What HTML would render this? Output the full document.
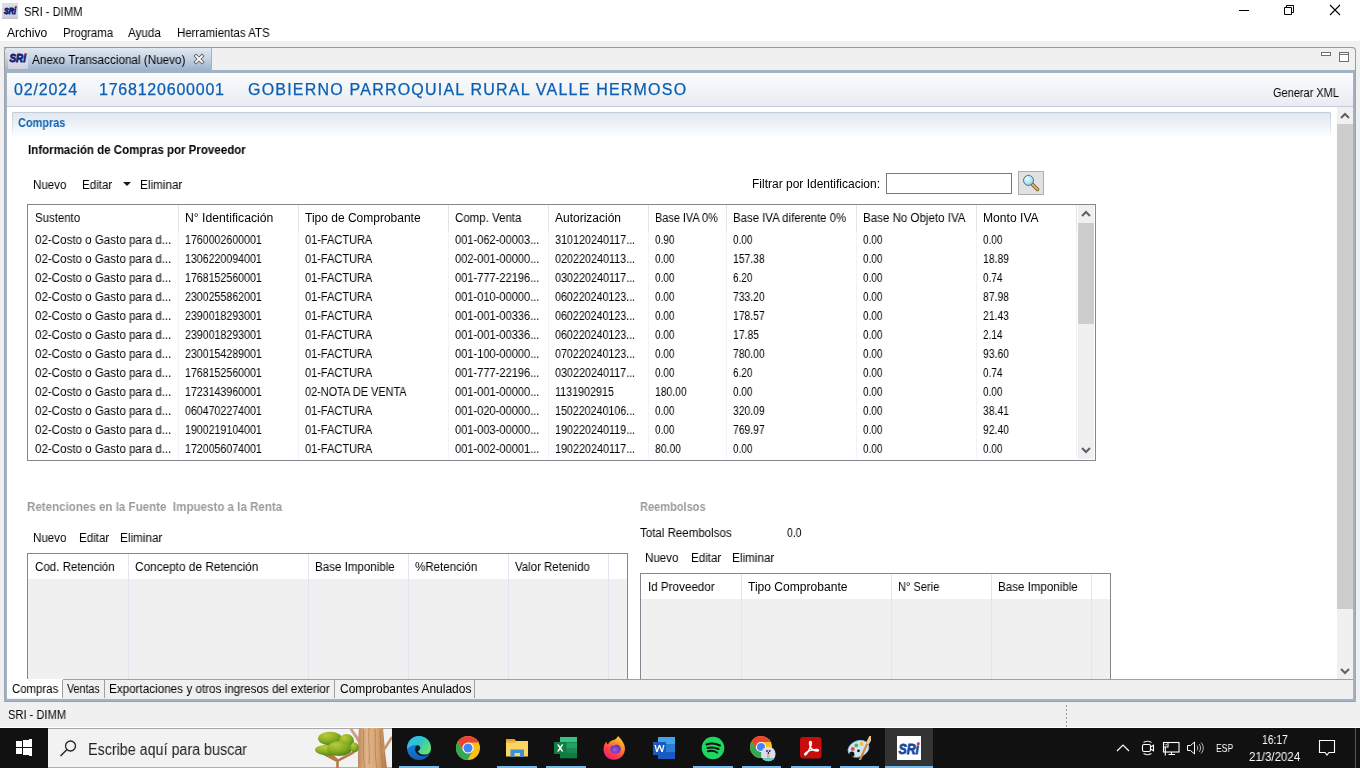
<!DOCTYPE html>
<html><head><meta charset="utf-8"><title>SRI - DIMM</title>
<style>
html,body{margin:0;padding:0}
body{width:1360px;height:768px;overflow:hidden;position:relative;background:#f0f0f0;font-family:"Liberation Sans",sans-serif;}
body>div,body>svg,body>span{position:absolute}
.t{position:absolute;white-space:pre;will-change:transform;font-family:"Liberation Sans",sans-serif}
</style></head><body>
<div style="left:0px;top:0px;width:1360px;height:41px;background:#fff"></div>
<svg style="left:2px;top:3px" width="16" height="16"><defs><linearGradient id="sg1" x1="0" y1="0" x2="0" y2="1"><stop offset="0" stop-color="#dcdce8"/><stop offset="0.7" stop-color="#d6d6e6"/><stop offset="1" stop-color="#c4c4d0"/></linearGradient></defs>
<rect width="16" height="16" fill="url(#sg1)"/>
<text x="2" y="10.6" font-family="Liberation Sans" font-weight="bold" font-style="italic" font-size="9.6" textLength="12" lengthAdjust="spacingAndGlyphs" fill="#0d1a6e" stroke="#0d1a6e" stroke-width="0.8">SRi</text>
<circle cx="14" cy="3.6" r="0.9" fill="#d04040"/></svg>
<span class="t" style="left:24px;top:6px;font-size:12px;line-height:12px;color:#000;transform:scaleX(0.9317);transform-origin:0 0;">SRI - DIMM</span>
<div style="left:1239px;top:10px;width:10px;height:1px;background:#000"></div>
<svg style="left:1283px;top:4px" width="12" height="12"><path d="M1.5 3.5h7v7h-7z M3.5 3.5v-2h7v7h-2" fill="none" stroke="#000" stroke-width="1"/></svg>
<svg style="left:1329px;top:4px" width="12" height="12"><path d="M1 1L11 11M11 1L1 11" stroke="#000" stroke-width="1.1"/></svg>
<span class="t" style="left:7px;top:27px;font-size:12px;line-height:12px;color:#000;transform:scaleX(1.0050);transform-origin:0 0;">Archivo</span>
<span class="t" style="left:63px;top:27px;font-size:12px;line-height:12px;color:#000;transform:scaleX(0.9509);transform-origin:0 0;">Programa</span>
<span class="t" style="left:128px;top:27px;font-size:12px;line-height:12px;color:#000;transform:scaleX(0.9706);transform-origin:0 0;">Ayuda</span>
<span class="t" style="left:177px;top:27px;font-size:12px;line-height:12px;color:#000;transform:scaleX(0.9526);transform-origin:0 0;">Herramientas ATS</span>
<div style="left:4px;top:47px;width:1352px;height:25px;background:#f0f0f0;border-top:1px solid #9a9a9a;border-right:1px solid #9a9a9a;border-top-right-radius:4px;box-sizing:border-box"></div>
<div style="left:4px;top:47px;width:208px;height:24px;background:linear-gradient(#e2e9f2,#c6d4e4 45%,#98afcb);border-top:1px solid #979797;border-left:1px solid #979797;border-right:1px solid #a6b0bc;border-top-left-radius:3px;box-sizing:border-box"></div>
<svg style="left:8px;top:50px" width="20" height="19"><defs><linearGradient id="sg2" x1="0" y1="0" x2="0" y2="1"><stop offset="0" stop-color="#dfe0ec"/><stop offset="0.75" stop-color="#d8d8e6"/><stop offset="1" stop-color="#cfd0dc"/></linearGradient></defs>
<rect width="20" height="19" fill="url(#sg2)"/>
<text x="1.5" y="12.2" font-family="Liberation Sans" font-weight="bold" font-style="italic" font-size="11.8" textLength="16.5" lengthAdjust="spacingAndGlyphs" fill="#13207a" stroke="#13207a" stroke-width="0.8">SRi</text>
<circle cx="17.6" cy="4.4" r="1.1" fill="#d03030"/></svg>
<span class="t" style="left:32px;top:54px;font-size:12px;line-height:12px;color:#000;transform:scaleX(0.9745);transform-origin:0 0;">Anexo Transaccional (Nuevo)</span>
<svg style="left:193px;top:53px" width="12" height="12"><path d="M3 3L9 9M9 3L3 9" stroke="#5f5f5f" stroke-width="3.6" stroke-linecap="square"/><path d="M3 3L9 9M9 3L3 9" stroke="#fff" stroke-width="1.8" stroke-linecap="square"/></svg>
<div style="left:1321px;top:52px;width:10px;height:4px;border:1px solid #6e6e6e;box-sizing:border-box;background:#fff"></div>
<div style="left:1339px;top:52px;width:10px;height:10px;border:1px solid #6e6e6e;box-sizing:border-box;background:#fff"></div>
<div style="left:1340px;top:54px;width:8px;height:1px;background:#6e6e6e"></div>
<div style="left:4px;top:70px;width:1352px;height:3px;background:#a3b3c6"></div>
<div style="left:4px;top:70px;width:3px;height:632px;background:linear-gradient(90deg,#97a1ad,#a2afbe 45%,#a5b2c2)"></div>
<div style="left:1353px;top:70px;width:3px;height:632px;background:linear-gradient(90deg,#a5b2c2,#a2afbe 55%,#97a1ad)"></div>
<div style="left:4px;top:699px;width:1352px;height:3px;background:linear-gradient(#a5b3c5,#a3b1c3 50%,#8f9cad)"></div>
<div style="left:7px;top:698px;width:1346px;height:1px;background:#e8eff8"></div>
<div style="left:7px;top:73px;width:1346px;height:33px;background:linear-gradient(#fbfcfe,#e8ecf2)"></div>
<div style="left:7px;top:106px;width:1346px;height:1px;background:#c3ccd7"></div>
<div style="left:7px;top:107px;width:1330px;height:572px;background:#fff"></div>
<span class="t" style="left:14px;top:82px;font-size:16px;line-height:16px;color:#0a5fb2;letter-spacing:0.867px;-webkit-text-stroke:0.25px #0a5fb2;">02/2024</span>
<span class="t" style="left:99px;top:82px;font-size:16px;line-height:16px;color:#0a5fb2;letter-spacing:0.775px;-webkit-text-stroke:0.25px #0a5fb2;">1768120600001</span>
<span class="t" style="left:248px;top:82px;font-size:16px;line-height:16px;color:#0a5fb2;letter-spacing:1.211px;-webkit-text-stroke:0.25px #0a5fb2;">GOBIERNO PARROQUIAL RURAL VALLE HERMOSO</span>
<span class="t" style="left:1273px;top:87px;font-size:12px;line-height:12px;color:#000;transform:scaleX(0.9167);transform-origin:0 0;">Generar XML</span>
<div style="left:12px;top:112px;width:1319px;height:26px;background:linear-gradient(#dfe7f1,#fff)"></div>
<div style="left:13px;top:112px;width:1317px;height:1px;background:#c4ccd6"></div>
<div style="left:12px;top:113px;width:1px;height:25px;background:linear-gradient(#c4ccd6,rgba(255,255,255,0))"></div>
<div style="left:1330px;top:113px;width:1px;height:25px;background:linear-gradient(#c4ccd6,rgba(255,255,255,0))"></div>
<span class="t" style="left:18px;top:117px;font-size:12px;line-height:12px;color:#0f62b0;transform:scaleX(0.9096);transform-origin:0 0;font-weight:bold;">Compras</span>
<span class="t" style="left:28px;top:144px;font-size:12px;line-height:12px;color:#000;transform:scaleX(0.9604);transform-origin:0 0;font-weight:bold;">Información de Compras por Proveedor</span>
<span class="t" style="left:33px;top:179px;font-size:12px;line-height:12px;color:#000;transform:scaleX(0.9629);transform-origin:0 0;">Nuevo</span>
<span class="t" style="left:82px;top:179px;font-size:12px;line-height:12px;color:#000;transform:scaleX(0.9677);transform-origin:0 0;">Editar</span>
<svg style="left:123px;top:182px" width="9" height="5"><path d="M0 0h8L4 4z" fill="#1a1a1a"/></svg>
<span class="t" style="left:140px;top:179px;font-size:12px;line-height:12px;color:#000;transform:scaleX(0.9791);transform-origin:0 0;">Eliminar</span>
<span class="t" style="left:752px;top:178px;font-size:12px;line-height:12px;color:#000;transform:scaleX(0.9969);transform-origin:0 0;">Filtrar por Identificacion:</span>
<div style="left:886px;top:173px;width:126px;height:21px;border:1px solid #7a7a7a;background:#fff;box-sizing:border-box"></div>
<div style="left:1018px;top:171px;width:26px;height:24px;border:1px solid #adadad;background:#e1e1e1;box-sizing:border-box"></div>
<svg style="left:1018px;top:171px" width="26" height="24">
<defs><radialGradient id="mg" cx="0.4" cy="0.35" r="0.7"><stop offset="0" stop-color="#e8fcff"/><stop offset="0.6" stop-color="#b0e8fa"/><stop offset="1" stop-color="#78c8ec"/></radialGradient></defs>
<line x1="14.5" y1="13.5" x2="19.5" y2="18.5" stroke="#6a4a20" stroke-width="3.4" stroke-linecap="round"/>
<line x1="14.5" y1="13.5" x2="19.5" y2="18.5" stroke="#eab85a" stroke-width="1.8" stroke-linecap="round"/>
<circle cx="10.5" cy="9.4" r="5" fill="url(#mg)" stroke="#56707e" stroke-width="1"/>
</svg>
<div style="left:27px;top:204px;width:1069px;height:257px;border:1px solid #828790;background:#fff;box-sizing:border-box"></div>
<div style="left:178px;top:205px;width:1px;height:254px;background:#f1f3f6"></div>
<div style="left:178px;top:205px;width:1px;height:26px;background:#e5e5e5"></div>
<div style="left:298px;top:205px;width:1px;height:254px;background:#f1f3f6"></div>
<div style="left:298px;top:205px;width:1px;height:26px;background:#e5e5e5"></div>
<div style="left:448px;top:205px;width:1px;height:254px;background:#f1f3f6"></div>
<div style="left:448px;top:205px;width:1px;height:26px;background:#e5e5e5"></div>
<div style="left:548px;top:205px;width:1px;height:254px;background:#f1f3f6"></div>
<div style="left:548px;top:205px;width:1px;height:26px;background:#e5e5e5"></div>
<div style="left:648px;top:205px;width:1px;height:254px;background:#f1f3f6"></div>
<div style="left:648px;top:205px;width:1px;height:26px;background:#e5e5e5"></div>
<div style="left:726px;top:205px;width:1px;height:254px;background:#f1f3f6"></div>
<div style="left:726px;top:205px;width:1px;height:26px;background:#e5e5e5"></div>
<div style="left:856px;top:205px;width:1px;height:254px;background:#f1f3f6"></div>
<div style="left:856px;top:205px;width:1px;height:26px;background:#e5e5e5"></div>
<div style="left:976px;top:205px;width:1px;height:254px;background:#f1f3f6"></div>
<div style="left:976px;top:205px;width:1px;height:26px;background:#e5e5e5"></div>
<div style="left:1076px;top:205px;width:1px;height:254px;background:#f1f3f6"></div>
<div style="left:1076px;top:205px;width:1px;height:26px;background:#e5e5e5"></div>
<span class="t" style="left:35px;top:212px;font-size:12px;line-height:12px;color:#000;transform:scaleX(0.9521);transform-origin:0 0;">Sustento</span>
<span class="t" style="left:185px;top:212px;font-size:12px;line-height:12px;color:#000;transform:scaleX(1.0172);transform-origin:0 0;">N° Identificación</span>
<span class="t" style="left:305px;top:212px;font-size:12px;line-height:12px;color:#000;transform:scaleX(1.0000);transform-origin:0 0;">Tipo de Comprobante</span>
<span class="t" style="left:455px;top:212px;font-size:12px;line-height:12px;color:#000;transform:scaleX(0.9571);transform-origin:0 0;">Comp. Venta</span>
<span class="t" style="left:555px;top:212px;font-size:12px;line-height:12px;color:#000;transform:scaleX(1.0000);transform-origin:0 0;">Autorización</span>
<span class="t" style="left:655px;top:212px;font-size:12px;line-height:12px;color:#000;transform:scaleX(0.9072);transform-origin:0 0;">Base IVA 0%</span>
<span class="t" style="left:733px;top:212px;font-size:12px;line-height:12px;color:#000;transform:scaleX(0.9496);transform-origin:0 0;">Base IVA diferente 0%</span>
<span class="t" style="left:863px;top:212px;font-size:12px;line-height:12px;color:#000;transform:scaleX(0.9623);transform-origin:0 0;">Base No Objeto IVA</span>
<span class="t" style="left:983px;top:212px;font-size:12px;line-height:12px;color:#000;transform:scaleX(1.0091);transform-origin:0 0;">Monto IVA</span>
<span class="t" style="left:35px;top:234px;font-size:12px;line-height:12px;color:#000;transform:scaleX(0.9645);transform-origin:0 0;">02-Costo o Gasto para d...</span>
<span class="t" style="left:185px;top:234px;font-size:12px;line-height:12px;color:#000;transform:scaleX(0.8851);transform-origin:0 0;">1760002600001</span>
<span class="t" style="left:305px;top:234px;font-size:12px;line-height:12px;color:#000;transform:scaleX(0.9178);transform-origin:0 0;">01-FACTURA</span>
<span class="t" style="left:455px;top:234px;font-size:12px;line-height:12px;color:#000;transform:scaleX(0.9231);transform-origin:0 0;">001-062-00003...</span>
<span class="t" style="left:555px;top:234px;font-size:12px;line-height:12px;color:#000;transform:scaleX(0.8989);transform-origin:0 0;">310120240117...</span>
<span class="t" style="left:655px;top:234px;font-size:12px;line-height:12px;color:#000;transform:scaleX(0.8333);transform-origin:0 0;">0.90</span>
<span class="t" style="left:733px;top:234px;font-size:12px;line-height:12px;color:#000;transform:scaleX(0.8333);transform-origin:0 0;">0.00</span>
<span class="t" style="left:863px;top:234px;font-size:12px;line-height:12px;color:#000;transform:scaleX(0.8333);transform-origin:0 0;">0.00</span>
<span class="t" style="left:983px;top:234px;font-size:12px;line-height:12px;color:#000;transform:scaleX(0.8333);transform-origin:0 0;">0.00</span>
<span class="t" style="left:35px;top:253px;font-size:12px;line-height:12px;color:#000;transform:scaleX(0.9645);transform-origin:0 0;">02-Costo o Gasto para d...</span>
<span class="t" style="left:185px;top:253px;font-size:12px;line-height:12px;color:#000;transform:scaleX(0.8851);transform-origin:0 0;">1306220094001</span>
<span class="t" style="left:305px;top:253px;font-size:12px;line-height:12px;color:#000;transform:scaleX(0.9178);transform-origin:0 0;">01-FACTURA</span>
<span class="t" style="left:455px;top:253px;font-size:12px;line-height:12px;color:#000;transform:scaleX(0.9231);transform-origin:0 0;">002-001-00000...</span>
<span class="t" style="left:555px;top:253px;font-size:12px;line-height:12px;color:#000;transform:scaleX(0.8989);transform-origin:0 0;">020220240113...</span>
<span class="t" style="left:655px;top:253px;font-size:12px;line-height:12px;color:#000;transform:scaleX(0.8333);transform-origin:0 0;">0.00</span>
<span class="t" style="left:733px;top:253px;font-size:12px;line-height:12px;color:#000;transform:scaleX(0.8649);transform-origin:0 0;">157.38</span>
<span class="t" style="left:863px;top:253px;font-size:12px;line-height:12px;color:#000;transform:scaleX(0.8333);transform-origin:0 0;">0.00</span>
<span class="t" style="left:983px;top:253px;font-size:12px;line-height:12px;color:#000;transform:scaleX(0.8667);transform-origin:0 0;">18.89</span>
<span class="t" style="left:35px;top:272px;font-size:12px;line-height:12px;color:#000;transform:scaleX(0.9645);transform-origin:0 0;">02-Costo o Gasto para d...</span>
<span class="t" style="left:185px;top:272px;font-size:12px;line-height:12px;color:#000;transform:scaleX(0.8851);transform-origin:0 0;">1768152560001</span>
<span class="t" style="left:305px;top:272px;font-size:12px;line-height:12px;color:#000;transform:scaleX(0.9178);transform-origin:0 0;">01-FACTURA</span>
<span class="t" style="left:455px;top:272px;font-size:12px;line-height:12px;color:#000;transform:scaleX(0.9231);transform-origin:0 0;">001-777-22196...</span>
<span class="t" style="left:555px;top:272px;font-size:12px;line-height:12px;color:#000;transform:scaleX(0.8989);transform-origin:0 0;">030220240117...</span>
<span class="t" style="left:655px;top:272px;font-size:12px;line-height:12px;color:#000;transform:scaleX(0.8333);transform-origin:0 0;">0.00</span>
<span class="t" style="left:733px;top:272px;font-size:12px;line-height:12px;color:#000;transform:scaleX(0.8333);transform-origin:0 0;">6.20</span>
<span class="t" style="left:863px;top:272px;font-size:12px;line-height:12px;color:#000;transform:scaleX(0.8333);transform-origin:0 0;">0.00</span>
<span class="t" style="left:983px;top:272px;font-size:12px;line-height:12px;color:#000;transform:scaleX(0.8333);transform-origin:0 0;">0.74</span>
<span class="t" style="left:35px;top:291px;font-size:12px;line-height:12px;color:#000;transform:scaleX(0.9645);transform-origin:0 0;">02-Costo o Gasto para d...</span>
<span class="t" style="left:185px;top:291px;font-size:12px;line-height:12px;color:#000;transform:scaleX(0.8851);transform-origin:0 0;">2300255862001</span>
<span class="t" style="left:305px;top:291px;font-size:12px;line-height:12px;color:#000;transform:scaleX(0.9178);transform-origin:0 0;">01-FACTURA</span>
<span class="t" style="left:455px;top:291px;font-size:12px;line-height:12px;color:#000;transform:scaleX(0.9231);transform-origin:0 0;">001-010-00000...</span>
<span class="t" style="left:555px;top:291px;font-size:12px;line-height:12px;color:#000;transform:scaleX(0.8889);transform-origin:0 0;">060220240123...</span>
<span class="t" style="left:655px;top:291px;font-size:12px;line-height:12px;color:#000;transform:scaleX(0.8333);transform-origin:0 0;">0.00</span>
<span class="t" style="left:733px;top:291px;font-size:12px;line-height:12px;color:#000;transform:scaleX(0.8649);transform-origin:0 0;">733.20</span>
<span class="t" style="left:863px;top:291px;font-size:12px;line-height:12px;color:#000;transform:scaleX(0.8333);transform-origin:0 0;">0.00</span>
<span class="t" style="left:983px;top:291px;font-size:12px;line-height:12px;color:#000;transform:scaleX(0.8667);transform-origin:0 0;">87.98</span>
<span class="t" style="left:35px;top:310px;font-size:12px;line-height:12px;color:#000;transform:scaleX(0.9645);transform-origin:0 0;">02-Costo o Gasto para d...</span>
<span class="t" style="left:185px;top:310px;font-size:12px;line-height:12px;color:#000;transform:scaleX(0.8851);transform-origin:0 0;">2390018293001</span>
<span class="t" style="left:305px;top:310px;font-size:12px;line-height:12px;color:#000;transform:scaleX(0.9178);transform-origin:0 0;">01-FACTURA</span>
<span class="t" style="left:455px;top:310px;font-size:12px;line-height:12px;color:#000;transform:scaleX(0.9231);transform-origin:0 0;">001-001-00336...</span>
<span class="t" style="left:555px;top:310px;font-size:12px;line-height:12px;color:#000;transform:scaleX(0.8889);transform-origin:0 0;">060220240123...</span>
<span class="t" style="left:655px;top:310px;font-size:12px;line-height:12px;color:#000;transform:scaleX(0.8333);transform-origin:0 0;">0.00</span>
<span class="t" style="left:733px;top:310px;font-size:12px;line-height:12px;color:#000;transform:scaleX(0.8649);transform-origin:0 0;">178.57</span>
<span class="t" style="left:863px;top:310px;font-size:12px;line-height:12px;color:#000;transform:scaleX(0.8333);transform-origin:0 0;">0.00</span>
<span class="t" style="left:983px;top:310px;font-size:12px;line-height:12px;color:#000;transform:scaleX(0.8667);transform-origin:0 0;">21.43</span>
<span class="t" style="left:35px;top:329px;font-size:12px;line-height:12px;color:#000;transform:scaleX(0.9645);transform-origin:0 0;">02-Costo o Gasto para d...</span>
<span class="t" style="left:185px;top:329px;font-size:12px;line-height:12px;color:#000;transform:scaleX(0.8851);transform-origin:0 0;">2390018293001</span>
<span class="t" style="left:305px;top:329px;font-size:12px;line-height:12px;color:#000;transform:scaleX(0.9178);transform-origin:0 0;">01-FACTURA</span>
<span class="t" style="left:455px;top:329px;font-size:12px;line-height:12px;color:#000;transform:scaleX(0.9231);transform-origin:0 0;">001-001-00336...</span>
<span class="t" style="left:555px;top:329px;font-size:12px;line-height:12px;color:#000;transform:scaleX(0.8889);transform-origin:0 0;">060220240123...</span>
<span class="t" style="left:655px;top:329px;font-size:12px;line-height:12px;color:#000;transform:scaleX(0.8333);transform-origin:0 0;">0.00</span>
<span class="t" style="left:733px;top:329px;font-size:12px;line-height:12px;color:#000;transform:scaleX(0.8667);transform-origin:0 0;">17.85</span>
<span class="t" style="left:863px;top:329px;font-size:12px;line-height:12px;color:#000;transform:scaleX(0.8333);transform-origin:0 0;">0.00</span>
<span class="t" style="left:983px;top:329px;font-size:12px;line-height:12px;color:#000;transform:scaleX(0.8333);transform-origin:0 0;">2.14</span>
<span class="t" style="left:35px;top:348px;font-size:12px;line-height:12px;color:#000;transform:scaleX(0.9645);transform-origin:0 0;">02-Costo o Gasto para d...</span>
<span class="t" style="left:185px;top:348px;font-size:12px;line-height:12px;color:#000;transform:scaleX(0.8851);transform-origin:0 0;">2300154289001</span>
<span class="t" style="left:305px;top:348px;font-size:12px;line-height:12px;color:#000;transform:scaleX(0.9178);transform-origin:0 0;">01-FACTURA</span>
<span class="t" style="left:455px;top:348px;font-size:12px;line-height:12px;color:#000;transform:scaleX(0.9231);transform-origin:0 0;">001-100-00000...</span>
<span class="t" style="left:555px;top:348px;font-size:12px;line-height:12px;color:#000;transform:scaleX(0.8889);transform-origin:0 0;">070220240123...</span>
<span class="t" style="left:655px;top:348px;font-size:12px;line-height:12px;color:#000;transform:scaleX(0.8333);transform-origin:0 0;">0.00</span>
<span class="t" style="left:733px;top:348px;font-size:12px;line-height:12px;color:#000;transform:scaleX(0.8649);transform-origin:0 0;">780.00</span>
<span class="t" style="left:863px;top:348px;font-size:12px;line-height:12px;color:#000;transform:scaleX(0.8333);transform-origin:0 0;">0.00</span>
<span class="t" style="left:983px;top:348px;font-size:12px;line-height:12px;color:#000;transform:scaleX(0.8667);transform-origin:0 0;">93.60</span>
<span class="t" style="left:35px;top:367px;font-size:12px;line-height:12px;color:#000;transform:scaleX(0.9645);transform-origin:0 0;">02-Costo o Gasto para d...</span>
<span class="t" style="left:185px;top:367px;font-size:12px;line-height:12px;color:#000;transform:scaleX(0.8851);transform-origin:0 0;">1768152560001</span>
<span class="t" style="left:305px;top:367px;font-size:12px;line-height:12px;color:#000;transform:scaleX(0.9178);transform-origin:0 0;">01-FACTURA</span>
<span class="t" style="left:455px;top:367px;font-size:12px;line-height:12px;color:#000;transform:scaleX(0.9231);transform-origin:0 0;">001-777-22196...</span>
<span class="t" style="left:555px;top:367px;font-size:12px;line-height:12px;color:#000;transform:scaleX(0.8989);transform-origin:0 0;">030220240117...</span>
<span class="t" style="left:655px;top:367px;font-size:12px;line-height:12px;color:#000;transform:scaleX(0.8333);transform-origin:0 0;">0.00</span>
<span class="t" style="left:733px;top:367px;font-size:12px;line-height:12px;color:#000;transform:scaleX(0.8333);transform-origin:0 0;">6.20</span>
<span class="t" style="left:863px;top:367px;font-size:12px;line-height:12px;color:#000;transform:scaleX(0.8333);transform-origin:0 0;">0.00</span>
<span class="t" style="left:983px;top:367px;font-size:12px;line-height:12px;color:#000;transform:scaleX(0.8333);transform-origin:0 0;">0.74</span>
<span class="t" style="left:35px;top:386px;font-size:12px;line-height:12px;color:#000;transform:scaleX(0.9645);transform-origin:0 0;">02-Costo o Gasto para d...</span>
<span class="t" style="left:185px;top:386px;font-size:12px;line-height:12px;color:#000;transform:scaleX(0.8851);transform-origin:0 0;">1723143960001</span>
<span class="t" style="left:305px;top:386px;font-size:12px;line-height:12px;color:#000;transform:scaleX(0.9107);transform-origin:0 0;">02-NOTA DE VENTA</span>
<span class="t" style="left:455px;top:386px;font-size:12px;line-height:12px;color:#000;transform:scaleX(0.9231);transform-origin:0 0;">001-001-00000...</span>
<span class="t" style="left:555px;top:386px;font-size:12px;line-height:12px;color:#000;transform:scaleX(0.8939);transform-origin:0 0;">1131902915</span>
<span class="t" style="left:655px;top:386px;font-size:12px;line-height:12px;color:#000;transform:scaleX(0.8649);transform-origin:0 0;">180.00</span>
<span class="t" style="left:733px;top:386px;font-size:12px;line-height:12px;color:#000;transform:scaleX(0.8333);transform-origin:0 0;">0.00</span>
<span class="t" style="left:863px;top:386px;font-size:12px;line-height:12px;color:#000;transform:scaleX(0.8333);transform-origin:0 0;">0.00</span>
<span class="t" style="left:983px;top:386px;font-size:12px;line-height:12px;color:#000;transform:scaleX(0.8333);transform-origin:0 0;">0.00</span>
<span class="t" style="left:35px;top:405px;font-size:12px;line-height:12px;color:#000;transform:scaleX(0.9645);transform-origin:0 0;">02-Costo o Gasto para d...</span>
<span class="t" style="left:185px;top:405px;font-size:12px;line-height:12px;color:#000;transform:scaleX(0.8851);transform-origin:0 0;">0604702274001</span>
<span class="t" style="left:305px;top:405px;font-size:12px;line-height:12px;color:#000;transform:scaleX(0.9178);transform-origin:0 0;">01-FACTURA</span>
<span class="t" style="left:455px;top:405px;font-size:12px;line-height:12px;color:#000;transform:scaleX(0.9231);transform-origin:0 0;">001-020-00000...</span>
<span class="t" style="left:555px;top:405px;font-size:12px;line-height:12px;color:#000;transform:scaleX(0.8889);transform-origin:0 0;">150220240106...</span>
<span class="t" style="left:655px;top:405px;font-size:12px;line-height:12px;color:#000;transform:scaleX(0.8333);transform-origin:0 0;">0.00</span>
<span class="t" style="left:733px;top:405px;font-size:12px;line-height:12px;color:#000;transform:scaleX(0.8649);transform-origin:0 0;">320.09</span>
<span class="t" style="left:863px;top:405px;font-size:12px;line-height:12px;color:#000;transform:scaleX(0.8333);transform-origin:0 0;">0.00</span>
<span class="t" style="left:983px;top:405px;font-size:12px;line-height:12px;color:#000;transform:scaleX(0.8667);transform-origin:0 0;">38.41</span>
<span class="t" style="left:35px;top:424px;font-size:12px;line-height:12px;color:#000;transform:scaleX(0.9645);transform-origin:0 0;">02-Costo o Gasto para d...</span>
<span class="t" style="left:185px;top:424px;font-size:12px;line-height:12px;color:#000;transform:scaleX(0.8851);transform-origin:0 0;">1900219104001</span>
<span class="t" style="left:305px;top:424px;font-size:12px;line-height:12px;color:#000;transform:scaleX(0.9178);transform-origin:0 0;">01-FACTURA</span>
<span class="t" style="left:455px;top:424px;font-size:12px;line-height:12px;color:#000;transform:scaleX(0.9231);transform-origin:0 0;">001-003-00000...</span>
<span class="t" style="left:555px;top:424px;font-size:12px;line-height:12px;color:#000;transform:scaleX(0.8989);transform-origin:0 0;">190220240119...</span>
<span class="t" style="left:655px;top:424px;font-size:12px;line-height:12px;color:#000;transform:scaleX(0.8333);transform-origin:0 0;">0.00</span>
<span class="t" style="left:733px;top:424px;font-size:12px;line-height:12px;color:#000;transform:scaleX(0.8649);transform-origin:0 0;">769.97</span>
<span class="t" style="left:863px;top:424px;font-size:12px;line-height:12px;color:#000;transform:scaleX(0.8333);transform-origin:0 0;">0.00</span>
<span class="t" style="left:983px;top:424px;font-size:12px;line-height:12px;color:#000;transform:scaleX(0.8667);transform-origin:0 0;">92.40</span>
<span class="t" style="left:35px;top:443px;font-size:12px;line-height:12px;color:#000;transform:scaleX(0.9645);transform-origin:0 0;">02-Costo o Gasto para d...</span>
<span class="t" style="left:185px;top:443px;font-size:12px;line-height:12px;color:#000;transform:scaleX(0.8851);transform-origin:0 0;">1720056074001</span>
<span class="t" style="left:305px;top:443px;font-size:12px;line-height:12px;color:#000;transform:scaleX(0.9178);transform-origin:0 0;">01-FACTURA</span>
<span class="t" style="left:455px;top:443px;font-size:12px;line-height:12px;color:#000;transform:scaleX(0.9231);transform-origin:0 0;">001-002-00001...</span>
<span class="t" style="left:555px;top:443px;font-size:12px;line-height:12px;color:#000;transform:scaleX(0.8989);transform-origin:0 0;">190220240117...</span>
<span class="t" style="left:655px;top:443px;font-size:12px;line-height:12px;color:#000;transform:scaleX(0.8667);transform-origin:0 0;">80.00</span>
<span class="t" style="left:733px;top:443px;font-size:12px;line-height:12px;color:#000;transform:scaleX(0.8333);transform-origin:0 0;">0.00</span>
<span class="t" style="left:863px;top:443px;font-size:12px;line-height:12px;color:#000;transform:scaleX(0.8333);transform-origin:0 0;">0.00</span>
<span class="t" style="left:983px;top:443px;font-size:12px;line-height:12px;color:#000;transform:scaleX(0.8333);transform-origin:0 0;">0.00</span>
<div style="left:1078px;top:205px;width:16px;height:254px;background:#f0f0f0"></div>
<div style="left:1078px;top:223px;width:16px;height:101px;background:#cdcdcd"></div>
<svg style="left:1081px;top:210px" width="10" height="8"><path d="M1 6L5 2L9 6" fill="none" stroke="#606060" stroke-width="2"/></svg>
<svg style="left:1081px;top:446px" width="10" height="8"><path d="M1 2L5 6L9 2" fill="none" stroke="#606060" stroke-width="2"/></svg>
<span class="t" style="left:27px;top:501px;font-size:12px;line-height:12px;color:#9b9b9b;transform:scaleX(0.9638);transform-origin:0 0;font-weight:bold;">Retenciones en la Fuente  Impuesto a la Renta</span>
<span class="t" style="left:33px;top:532px;font-size:12px;line-height:12px;color:#000;transform:scaleX(0.9629);transform-origin:0 0;">Nuevo</span>
<span class="t" style="left:79px;top:532px;font-size:12px;line-height:12px;color:#000;transform:scaleX(0.9677);transform-origin:0 0;">Editar</span>
<span class="t" style="left:120px;top:532px;font-size:12px;line-height:12px;color:#000;transform:scaleX(0.9791);transform-origin:0 0;">Eliminar</span>
<div style="left:27px;top:553px;width:601px;height:130px;border:1px solid #828790;background:#f0f0f0;box-sizing:border-box"></div>
<div style="left:28px;top:554px;width:599px;height:25px;background:#fff"></div>
<div style="left:128px;top:554px;width:1px;height:125px;background:#dfe6ef"></div>
<div style="left:308px;top:554px;width:1px;height:125px;background:#dfe6ef"></div>
<div style="left:408px;top:554px;width:1px;height:125px;background:#dfe6ef"></div>
<div style="left:508px;top:554px;width:1px;height:125px;background:#dfe6ef"></div>
<div style="left:608px;top:554px;width:1px;height:125px;background:#dfe6ef"></div>
<span class="t" style="left:35px;top:561px;font-size:12px;line-height:12px;color:#000;transform:scaleX(0.9639);transform-origin:0 0;">Cod. Retención</span>
<span class="t" style="left:135px;top:561px;font-size:12px;line-height:12px;color:#000;transform:scaleX(0.9840);transform-origin:0 0;">Concepto de Retención</span>
<span class="t" style="left:315px;top:561px;font-size:12px;line-height:12px;color:#000;transform:scaleX(0.9639);transform-origin:0 0;">Base Imponible</span>
<span class="t" style="left:415px;top:561px;font-size:12px;line-height:12px;color:#000;transform:scaleX(0.9631);transform-origin:0 0;">%Retención</span>
<span class="t" style="left:515px;top:561px;font-size:12px;line-height:12px;color:#000;transform:scaleX(0.9532);transform-origin:0 0;">Valor Retenido</span>
<span class="t" style="left:640px;top:501px;font-size:12px;line-height:12px;color:#9b9b9b;transform:scaleX(0.9194);transform-origin:0 0;font-weight:bold;">Reembolsos</span>
<span class="t" style="left:640px;top:527px;font-size:12px;line-height:12px;color:#000;transform:scaleX(0.9600);transform-origin:0 0;">Total Reembolsos</span>
<span class="t" style="left:787px;top:527px;font-size:12px;line-height:12px;color:#000;transform:scaleX(0.8647);transform-origin:0 0;">0.0</span>
<span class="t" style="left:645px;top:552px;font-size:12px;line-height:12px;color:#000;transform:scaleX(0.9629);transform-origin:0 0;">Nuevo</span>
<span class="t" style="left:691px;top:552px;font-size:12px;line-height:12px;color:#000;transform:scaleX(0.9677);transform-origin:0 0;">Editar</span>
<span class="t" style="left:732px;top:552px;font-size:12px;line-height:12px;color:#000;transform:scaleX(0.9791);transform-origin:0 0;">Eliminar</span>
<div style="left:640px;top:573px;width:471px;height:110px;border:1px solid #828790;background:#f0f0f0;box-sizing:border-box"></div>
<div style="left:641px;top:574px;width:469px;height:25px;background:#fff"></div>
<div style="left:741px;top:574px;width:1px;height:105px;background:#dfe6ef"></div>
<div style="left:891px;top:574px;width:1px;height:105px;background:#dfe6ef"></div>
<div style="left:991px;top:574px;width:1px;height:105px;background:#dfe6ef"></div>
<div style="left:1091px;top:574px;width:1px;height:105px;background:#dfe6ef"></div>
<span class="t" style="left:648px;top:581px;font-size:12px;line-height:12px;color:#000;transform:scaleX(0.9710);transform-origin:0 0;">Id Proveedor</span>
<span class="t" style="left:748px;top:581px;font-size:12px;line-height:12px;color:#000;transform:scaleX(1.0051);transform-origin:0 0;">Tipo Comprobante</span>
<span class="t" style="left:898px;top:581px;font-size:12px;line-height:12px;color:#000;transform:scaleX(0.9200);transform-origin:0 0;">N° Serie</span>
<span class="t" style="left:998px;top:581px;font-size:12px;line-height:12px;color:#000;transform:scaleX(0.9639);transform-origin:0 0;">Base Imponible</span>
<div style="left:1337px;top:107px;width:16px;height:572px;background:#f0f0f0"></div>
<div style="left:1337px;top:124px;width:16px;height:485px;background:#cdcdcd"></div>
<svg style="left:1340px;top:112px" width="10" height="8"><path d="M1 6L5 2L9 6" fill="none" stroke="#606060" stroke-width="2"/></svg>
<svg style="left:1340px;top:667px" width="10" height="8"><path d="M1 2L5 6L9 2" fill="none" stroke="#606060" stroke-width="2"/></svg>
<div style="left:7px;top:679px;width:1346px;height:19px;background:#f0f0f0;border-top:1px solid #a0a0a0;box-sizing:border-box"></div>
<div style="left:7px;top:679px;width:56px;height:19px;background:#fff"></div>
<div style="left:62px;top:680px;width:1px;height:18px;background:#a0a0a0"></div>
<div style="left:104px;top:680px;width:1px;height:18px;background:#a0a0a0"></div>
<div style="left:334px;top:680px;width:1px;height:18px;background:#a0a0a0"></div>
<div style="left:474px;top:680px;width:1px;height:18px;background:#a0a0a0"></div>
<span class="t" style="left:12px;top:683px;font-size:12px;line-height:12px;color:#000;transform:scaleX(0.9490);transform-origin:0 0;">Compras</span>
<span class="t" style="left:67px;top:683px;font-size:12px;line-height:12px;color:#000;transform:scaleX(0.8892);transform-origin:0 0;">Ventas</span>
<span class="t" style="left:109px;top:683px;font-size:12px;line-height:12px;color:#000;transform:scaleX(0.9736);transform-origin:0 0;">Exportaciones y otros ingresos del exterior</span>
<span class="t" style="left:340px;top:683px;font-size:12px;line-height:12px;color:#000;transform:scaleX(1.0000);transform-origin:0 0;">Comprobantes Anulados</span>
<span class="t" style="left:8px;top:709px;font-size:12px;line-height:12px;color:#000;transform:scaleX(0.9254);transform-origin:0 0;">SRI - DIMM</span>
<div style="left:1066px;top:705px;width:1px;height:2px;background:#9a9a9a"></div>
<div style="left:1066px;top:709px;width:1px;height:2px;background:#9a9a9a"></div>
<div style="left:1066px;top:713px;width:1px;height:2px;background:#9a9a9a"></div>
<div style="left:1066px;top:717px;width:1px;height:2px;background:#9a9a9a"></div>
<div style="left:1066px;top:721px;width:1px;height:2px;background:#9a9a9a"></div>
<div style="left:1066px;top:725px;width:1px;height:2px;background:#9a9a9a"></div>
<div style="left:0px;top:727px;width:1360px;height:1px;background:#fff"></div>
<div style="left:0px;top:728px;width:1360px;height:40px;background:#111"></div>
<svg style="left:16px;top:739px" width="17" height="18" shape-rendering="crispEdges"><path d="M0 2.5L6 1.6V8H0z M7 1.4L16 0V8H7z M0 9H6V15.4L0 14.5z M7 9H16V17L7 15.6z" fill="#fff"/></svg>
<div style="left:48px;top:728px;width:344px;height:40px;background:#f2f2f2;border-top:1px solid #a8a8a8;border-bottom:1px solid #b0b0b0;box-sizing:border-box"></div>
<svg style="left:59px;top:739px" width="19" height="19"><circle cx="11.5" cy="7" r="5" fill="none" stroke="#222" stroke-width="1.3"/><path d="M8 10.6L1.5 17" stroke="#222" stroke-width="1.4"/></svg>
<span class="t" style="left:88px;top:742px;font-size:16px;line-height:16px;color:#222;transform:scaleX(0.8939);transform-origin:0 0;">Escribe aquí para buscar</span>
<svg style="left:312px;top:728px" width="80" height="40">
<defs><linearGradient id="tr" x1="0" x2="1"><stop offset="0" stop-color="#c08a5e"/><stop offset="0.3" stop-color="#e0b48a"/><stop offset="0.65" stop-color="#d6a676"/><stop offset="1" stop-color="#b07a4a"/></linearGradient>
<radialGradient id="lf" cx="0.35" cy="0.25" r="0.85"><stop offset="0" stop-color="#bccb3a"/><stop offset="0.55" stop-color="#84aa22"/><stop offset="1" stop-color="#3f7c0e"/></radialGradient></defs>
<path d="M37 0C40 6 45 12 48 18L50 14C47 9 42 4 40 0z" fill="#caa080"/>
<path d="M47 0H71C72 10 73 25 75 40H46C46 28 46 12 47 0z" fill="url(#tr)"/>
<path d="M51.5 2C52 14 50.5 26 53 40M57 0C56 10 58 22 57 36M63 1C64 10 62 24 65 40M68 3C69 14 69 28 71 40" stroke="#a8703e" stroke-width="1" fill="none" opacity="0.55"/>
<path d="M80 9C77 14 73 20 70 25" stroke="#c99468" stroke-width="2.5" fill="none"/>
<path d="M25.5 40V32M25.5 33C20 30 15 28 11 25M25.5 33C30 30 36 28 42 24M25 32C22 29 20 28 18 26" stroke="#b77a45" stroke-width="2.6" fill="none"/>
<ellipse cx="18" cy="22" rx="15" ry="5.5" fill="url(#lf)"/>
<ellipse cx="18" cy="10.5" rx="12" ry="6.8" fill="url(#lf)"/>
<ellipse cx="34.5" cy="13" rx="7.5" ry="7" fill="url(#lf)"/>
<ellipse cx="27.5" cy="20.5" rx="12.5" ry="7.5" fill="url(#lf)"/>
<ellipse cx="42.5" cy="19.5" rx="4.2" ry="5" fill="url(#lf)"/>
</svg>
<svg style="left:407px;top:736px" width="24" height="24"><defs><linearGradient id="eb" x1="0" y1="0" x2="0.6" y2="1"><stop offset="0" stop-color="#1b8ae6"/><stop offset="1" stop-color="#0f5fb8"/></linearGradient><linearGradient id="eg" x1="0" y1="0" x2="1" y2="0.7"><stop offset="0" stop-color="#38b6f4"/><stop offset="0.5" stop-color="#2cc4c8"/><stop offset="1" stop-color="#6ce268"/></linearGradient></defs><circle cx="12" cy="12" r="12" fill="url(#eb)"/><path d="M0.2 11C0.8 4.8 5.8 0 12 0C18.8 0 24 5.2 24 11.8C24 16.3 21 18.8 17.2 18.8C14 18.8 11.5 17.2 10.8 15C13.8 14 14.5 9.8 10.5 9.2C6.5 8.6 2.5 10.5 0.2 13z" fill="url(#eg)"/><path d="M10.5 9.2C14.5 9.8 13.8 14 10.8 15C11.5 17.2 14 18.8 17.2 18.8C20 18.8 22 17.8 23.2 16.5C21.5 19 18.5 20.3 15.5 20C12 19.6 8.8 17.6 8.2 14.2C7.8 11.8 8.6 10 10.5 9.2z" fill="#111" opacity="0.9"/></svg>
<svg style="left:456px;top:736px" width="24" height="24"><defs><clipPath id="cc1"><circle cx="12" cy="12" r="12"/></clipPath></defs><circle cx="12" cy="12" r="12" fill="#fbc117"/><g clip-path="url(#cc1)"><path d="M12.00 12.00L12.00 6.40L42.00 6.40L52.00 -28.00L-28.00 -28.00L-7.85 -11.18L7.15 14.80z" fill="#ea4335"/><path d="M12.00 12.00L7.15 14.80L-7.85 -11.18L-28.00 52.00L1.85 40.78L16.85 14.80z" fill="#34a853"/></g><circle cx="12" cy="12" r="5.6" fill="#fff"/><circle cx="12" cy="12" r="4.5" fill="#4285f4"/></svg>
<svg style="left:504px;top:736px" width="24" height="24"><path d="M2 3H10.5L12 5H2z" fill="#e2a12e"/><path d="M2 5H24V20.5H2z" fill="#fcd462"/><path d="M2 5H11L12.5 7H2z" fill="#f0b848"/><path d="M6.5 21V13.5H20V21H16V17H10.5V21z" fill="#3d8fd8"/></svg>
<svg style="left:553px;top:736px" width="24" height="24"><path d="M7 1H25V6.5H7z" fill="#33c481"/><path d="M7 6.5H25V12H7z" fill="#21a366"/><path d="M7 12H25V17H7z" fill="#1b8a50"/><path d="M7 17H25V22.3H7z" fill="#107c41"/><path d="M1 6H13.4V18H1z" fill="#107c41"/><path d="M4 8.5L6.2 12L4 15.5H5.9L7.2 13.3L8.5 15.5H10.4L8.2 12L10.4 8.5H8.5L7.2 10.7L5.9 8.5z" fill="#fff"/></svg>
<svg style="left:602px;top:736px" width="24" height="24"><defs><linearGradient id="ff" x1="0.8" y1="0" x2="0.2" y2="1"><stop offset="0" stop-color="#ffd43a"/><stop offset="0.35" stop-color="#ff8a2a"/><stop offset="0.7" stop-color="#ff3a4a"/><stop offset="1" stop-color="#e8207a"/></linearGradient><radialGradient id="fp" cx="0.45" cy="0.6" r="0.6"><stop offset="0" stop-color="#9a5ce0"/><stop offset="1" stop-color="#5a2ab8"/></radialGradient></defs><path d="M12 23.7C5.8 23.7 1.5 19 1.5 13.2C1.5 10 2.8 7.3 4.5 5.5C4.5 7 5 8 6 8.5C7 6 9 4.5 11.5 4C13.5 3.5 15 2 16 0C18 2 21 5 22.3 9C23 11 23 13 22.8 14.5C22 20 17.5 23.7 12 23.7z" fill="url(#ff)"/><ellipse cx="13.5" cy="13" rx="5.3" ry="4.5" fill="url(#fp)"/><path d="M9 8.5C11 7 14 7 16 8C14 8.2 12.5 9 12 10z" fill="#ff7a30"/></svg>
<svg style="left:652px;top:736px" width="24" height="24"><path d="M6 1H23V23H6z" fill="#41a5ee"/><path d="M6 8H23V16H6z" fill="#2b7cd3"/><path d="M6 16H23V23H6z" fill="#185abd"/><path d="M1 6H14V19H1z" fill="#185abd"/><path d="M2.5 9L4.2 16H5.6L7.5 11L9.4 16H10.8L12.5 9H11.1L10.1 14L8.2 9H6.8L4.9 14L3.9 9z" fill="#fff"/></svg>
<svg style="left:701px;top:736px" width="24" height="24"><circle cx="12" cy="12" r="11.3" fill="#1ed760"/><path d="M5.5 8.5C10 7 15 7.5 19 9.5M6.5 12C10 11 14 11.5 17.5 13M7 15.3C10 14.5 13.5 15 16 16.5" stroke="#111" stroke-width="2" stroke-linecap="round" fill="none"/></svg>
<svg style="left:750px;top:736px" width="24" height="24"><defs><clipPath id="cc2"><circle cx="11" cy="11" r="11"/></clipPath></defs><circle cx="11" cy="11" r="11" fill="#fbc117"/><g clip-path="url(#cc2)"><path d="M11.00 11.00L11.00 5.90L41.00 5.90L51.00 -29.00L-29.00 -29.00L-8.42 -12.43L6.58 13.55z" fill="#ea4335"/><path d="M11.00 11.00L6.58 13.55L-8.42 -12.43L-29.00 51.00L0.42 39.53L15.42 13.55z" fill="#34a853"/></g><circle cx="11" cy="11" r="5.1" fill="#fff"/><circle cx="11" cy="11" r="4.0" fill="#4285f4"/></svg>
<svg style="left:760px;top:746px" width="16" height="16"><defs><clipPath id="avc"><circle cx="8.3" cy="8" r="7.3"/></clipPath></defs><circle cx="8.3" cy="8" r="7.3" fill="#dcdcec"/><g clip-path="url(#avc)"><rect x="0" y="12" width="16" height="4" fill="#6cc8c0"/><path d="M7 6.5L8.3 8.5L9.6 6.5V12H7z" fill="#c8b890"/><circle cx="7" cy="5" r="1" fill="#3a3030"/><circle cx="9.6" cy="5" r="1" fill="#3a3030"/><rect x="7.8" y="6" width="1.2" height="2" fill="#3a3030"/></g></svg>
<svg style="left:798px;top:736px" width="24" height="24"><rect x="2" y="1" width="21.5" height="21.5" rx="3" fill="#c80d0a"/><path d="M12.5 5.5C11 5.5 11.5 9 12.5 11C13.5 13 16 15 19.5 15C21 15 20.5 13.5 19 13.5C15 13.5 10 15 7.5 17C6 18.5 7 19.5 8 18.5C10 16.5 12 12 13 9C13.5 7 13.5 5.5 12.5 5.5z" fill="none" stroke="#fff" stroke-width="1.5" stroke-linejoin="round"/></svg>
<svg style="left:847px;top:736px" width="24" height="24"><ellipse cx="11.5" cy="12.8" rx="10.8" ry="8" transform="rotate(-22 11.5 12.8)" fill="#cfe6f6" stroke="#8fb8d8" stroke-width="0.8"/><circle cx="4.8" cy="18.2" r="2.6" fill="#111"/><circle cx="5.8" cy="13" r="2" fill="#e0504a"/><circle cx="9.3" cy="9.3" r="1.9" fill="#48b848"/><circle cx="14.5" cy="8" r="1.9" fill="#f0c030"/><circle cx="11.5" cy="14.8" r="1.4" fill="#111"/><path d="M21.5 5L13 23.5" stroke="#d88a38" stroke-width="2.2" stroke-linecap="round"/><path d="M24 0.8L21 6.5" stroke="#ecc88a" stroke-width="3.6" stroke-linecap="round"/></svg>
<div style="left:885px;top:728px;width:48px;height:40px;background:#333"></div>
<svg style="left:897px;top:736px" width="24" height="24"><rect width="24" height="24" fill="#fff"/>
<text x="1.5" y="17.8" font-family="Liberation Sans" font-weight="bold" font-style="italic" font-size="15" textLength="20.5" lengthAdjust="spacingAndGlyphs" fill="#1a47a0" stroke="#1a47a0" stroke-width="0.8">SRi</text>
<circle cx="21" cy="8" r="1.2" fill="#e03030"/></svg>
<div style="left:399px;top:766px;width:40px;height:2px;background:#76b9ed"></div>
<div style="left:497px;top:766px;width:40px;height:2px;background:#76b9ed"></div>
<div style="left:546px;top:766px;width:40px;height:2px;background:#76b9ed"></div>
<div style="left:693px;top:766px;width:40px;height:2px;background:#76b9ed"></div>
<div style="left:742px;top:766px;width:39px;height:2px;background:#76b9ed"></div>
<div style="left:791px;top:766px;width:40px;height:2px;background:#76b9ed"></div>
<div style="left:840px;top:766px;width:39px;height:2px;background:#76b9ed"></div>
<div style="left:885px;top:766px;width:48px;height:2px;background:#76b9ed"></div>
<svg style="left:1116px;top:743px" width="14" height="9"><path d="M1 8L7 2L13 8" fill="none" stroke="#fff" stroke-width="1.2"/></svg>
<svg style="left:1141px;top:739px" width="14" height="18"><path d="M2.5 3.5Q6.5 1 10.5 3.5M2.5 14.5Q6.5 17 10.5 14.5" stroke="#ddd" stroke-width="1.1" fill="none"/><rect x="1.5" y="5.5" width="8" height="7" rx="1.5" fill="none" stroke="#fff" stroke-width="1.1"/><path d="M9.5 8L12.5 6.3V11.7L9.5 10" fill="none" stroke="#fff" stroke-width="1.1"/></svg>
<svg style="left:1162px;top:741px" width="18" height="15"><rect x="1.5" y="1.5" width="15.5" height="9.5" fill="none" stroke="#fff" stroke-width="1.1"/><rect x="1.5" y="1.5" width="4.5" height="4.5" fill="none" stroke="#fff" stroke-width="1"/><path d="M2.8 3.2L3.8 4.3L4.8 3.2" stroke="#fff" stroke-width="0.8" fill="none"/><path d="M3.3 6V14.5M9.5 11V13.5M6.5 13.5H13" stroke="#fff" stroke-width="1.1"/></svg>
<svg style="left:1186px;top:740px" width="18" height="16"><path d="M1.5 5.5H4.5L8.5 2V14L4.5 10.5H1.5z" fill="none" stroke="#fff"/><path d="M11 5.5C12 7 12 9 11 10.5M13 4C15 6 15 10 13 12M15 2.5C18 5.5 18 10.5 15 13.5" fill="none" stroke="#bbb"/></svg>
<span class="t" style="left:1216px;top:743px;font-size:11px;line-height:11px;color:#fff;transform:scaleX(0.7818);transform-origin:0 0;">ESP</span>
<span class="t" style="left:1262px;top:734px;font-size:12px;line-height:12px;color:#fff;transform:scaleX(0.8600);transform-origin:0 0;">16:17</span>
<span class="t" style="left:1249px;top:751px;font-size:12px;line-height:12px;color:#fff;transform:scaleX(0.9593);transform-origin:0 0;">21/3/2024</span>
<svg style="left:1318px;top:739px" width="18" height="18"><path d="M1.5 1.5H16.5V13.5H11L9 16L7 13.5H1.5z" fill="none" stroke="#fff" stroke-width="1.1"/></svg>
<div style="left:1355px;top:728px;width:1px;height:40px;background:#555"></div>
</body></html>
